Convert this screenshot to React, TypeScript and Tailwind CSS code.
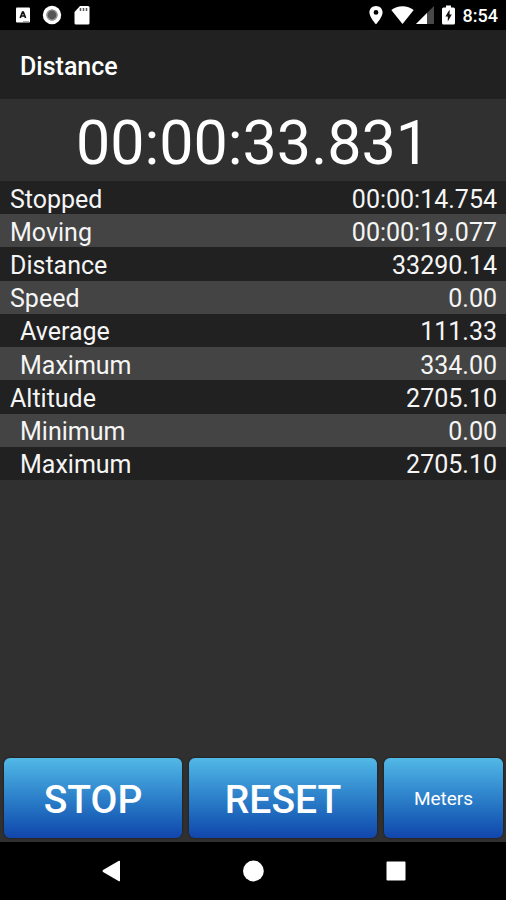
import React, { useState } from 'react';

type Reading = { label: string; value: string; nested?: boolean };

const ELAPSED = '00:00:33.831';

const readings: Reading[] = [
  { label: 'Stopped', value: '00:00:14.754' },
  { label: 'Moving', value: '00:00:19.077' },
  { label: 'Distance', value: '33290.14' },
  { label: 'Speed', value: '0.00' },
  { label: 'Average', value: '111.33', nested: true },
  { label: 'Maximum', value: '334.00', nested: true },
  { label: 'Altitude', value: '2705.10' },
  { label: 'Minimum', value: '0.00', nested: true },
  { label: 'Maximum', value: '2705.10', nested: true },
];

const buttonStyle =
  'h-20 rounded-md bg-linear-to-b from-[#52b9e6] to-[#1245ab] text-white shadow-[0_0_2px_#111]';

function StatusBar() {
  return (
    <div className="flex h-[30px] items-center justify-between bg-black pl-4 pr-2 text-white">
      <div className="flex items-center gap-3">
        {/* Input method */}
        <svg className="h-4 w-[14px]" viewBox="0 0 14 16" fill="none">
          <rect y="0.5" width="14" height="15" rx="1" fill="#fff" />
          <path d="M4.2 11L6.5 5H7.3L9.6 11M5.2 9H8.6" stroke="#111" strokeWidth="1.7" />
          <path d="M7 14.5H13" stroke="#aaa" />
        </svg>
        {/* Recording */}
        <svg className="h-5 w-5" viewBox="0 0 20 20">
          <circle cx="10" cy="10" r="9.2" fill="#fff" />
          <circle cx="10" cy="10" r="5.5" fill="#555" />
          <circle cx="10" cy="10" r="5" fill="none" stroke="#999" strokeWidth="1.2" />
        </svg>
        {/* SD card */}
        <svg className="h-5 w-4" viewBox="0 0 16 20">
          <path d="M6 1H14Q15.5 1 15.5 2.5V18Q15.5 19.5 14 19.5H2Q.5 19.5 .5 18V7Z" fill="#fff" />
          <path d="M6.5 3V6M9.5 3V6M12.5 3V6" stroke="#555" strokeWidth="1.5" />
        </svg>
      </div>

      <div className="flex items-center">
        {/* Location */}
        <svg className="mr-2 h-5 w-[14px]" viewBox="0 0 14 20">
          <path
            d="M7 1C3.2 1 .4 3.8 .4 7.4C.4 12 7 19.3 7 19.3S13.6 12 13.6 7.4C13.6 3.8 10.8 1 7 1ZM7 5A2.4 2.4 0 1 1 7 9.8A2.4 2.4 0 0 1 7 5Z"
            fill="#fff"
            fillRule="evenodd"
          />
        </svg>
        {/* Wi-Fi */}
        <svg className="mr-0.5 h-5 w-[23px]" viewBox="0 0 23 20">
          <path d="M.3 5Q5 1.2 11.5 1.2T22.7 5L11.5 19Z" fill="#fff" />
        </svg>
        {/* Signal */}
        <svg className="mr-2 h-5 w-[18px]" viewBox="0 0 18 20">
          <path d="M18 1V19H0Z" fill="#484848" />
          <path d="M11 8V19H0Z" fill="#fff" />
        </svg>
        {/* Battery, charging */}
        <svg className="mr-2 h-5 w-[13px]" viewBox="0 0 13 20">
          <path d="M4 .5H9V2.5H11.5Q13 2.5 13 4V18Q13 19.5 11.5 19.5H1.5Q0 19.5 0 18V4Q0 2.5 1.5 2.5H4Z" fill="#fff" />
          <path d="M7.6 4.5L3.4 11.5H5.8V16.5L9.8 9.5H7.6Z" fill="#111" />
        </svg>
        <span className="pt-0.5 text-lg font-medium">8:54</span>
      </div>
    </div>
  );
}

function NavigationBar() {
  return (
    <nav className="flex h-[58px] items-center justify-between bg-black px-[100px]">
      <button aria-label="Back">
        <svg className="h-[22px] w-[22px]" viewBox="0 0 22 22">
          <path d="M20 1V21Q19.5 21.5 18.5 21L3 12Q2 11 3 10L18.5 1Q19.5 .5 20 1Z" fill="#fff" />
        </svg>
      </button>
      <button aria-label="Home">
        <svg className="h-[22px] w-[22px]" viewBox="0 0 22 22">
          <circle cx="11.4" cy="11" r="10.4" fill="#fff" />
        </svg>
      </button>
      <button aria-label="Recent apps">
        <svg className="h-[22px] w-[22px]" viewBox="0 0 22 22">
          <rect x="2.5" y="1.5" width="19" height="19" rx="1" fill="#fff" />
        </svg>
      </button>
    </nav>
  );
}

export default function App() {
  const [metric, setMetric] = useState(true);

  return (
    <div className="flex min-h-screen flex-col bg-[#303030] font-['Roboto',sans-serif] text-white">
      <StatusBar />

      <header className="flex h-[69px] items-center bg-[#212121] px-5 pt-1">
        <h1 className="text-[25px] leading-8 font-medium">Distance</h1>
      </header>

      <main className="flex flex-1 flex-col">
        <div className="flex h-[82px] items-center justify-center pt-1.5 text-[61px] leading-none">
          {ELAPSED}
        </div>

        <table className="h-[299px] w-full text-[25px] leading-7 text-[#f5f5f5]">
          <tbody>
            {readings.map((row, i) => (
              <tr key={i} className="odd:bg-[#212121] even:bg-[#444444]">
                <th
                  scope="row"
                  className={`pt-1 pb-0 text-left font-normal ${row.nested ? 'pl-5' : 'pl-2.5'}`}
                >
                  {row.label}
                </th>
                <td className="pt-1 pr-[9px] pb-0 text-right">{row.value}</td>
              </tr>
            ))}
          </tbody>
        </table>

        <div className="mt-auto grid grid-cols-[178fr_188fr_119fr] gap-[7px] pr-[3px] pb-1 pl-1">
          <button className={`${buttonStyle} pt-1 text-[39px] font-medium`}>STOP</button>
          <button className={`${buttonStyle} pt-1 text-[39px] font-medium`}>RESET</button>
          <button className={`${buttonStyle} pt-0.5 text-[19px]`} onClick={() => setMetric(!metric)}>
            {metric ? 'Meters' : 'Miles'}
          </button>
        </div>
      </main>

      <NavigationBar />
    </div>
  );
}
